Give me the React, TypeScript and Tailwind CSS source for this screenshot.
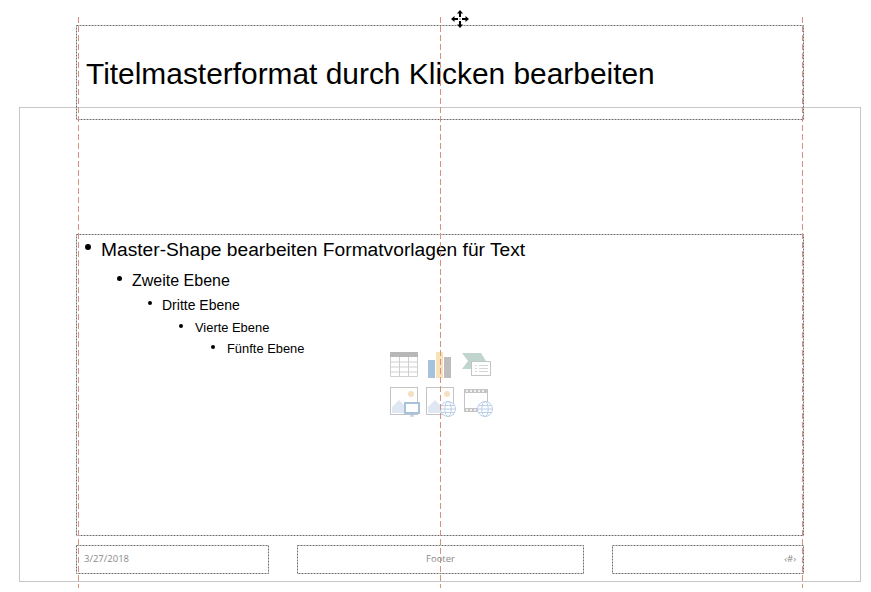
const levels = [
  { text: "Master-Shape bearbeiten Formatvorlagen für Text", row: "h-[22px] gap-[10px] pl-[9px] text-[19.2px]", dot: "size-[6px] mb-[6px]" },
  { text: "Zweite Ebene", row: "mt-[9px] h-[22px] gap-[10px] pl-[41px] text-[16px]", dot: "size-[5px] mb-[6px]" },
  { text: "Dritte Ebene", row: "mt-[4px] h-[18px] gap-[10px] pl-[72px] text-[14px]", dot: "size-[4px] mb-[5px]" },
  { text: "Vierte Ebene", row: "mt-[6px] h-[16px] gap-[12px] pl-[103px] text-[12.9px]", dot: "size-[4px] mb-[4px]" },
  { text: "Fünfte Ebene", row: "mt-[5px] h-[16px] gap-[12px] pl-[135px] text-[12.9px]", dot: "size-[4px] mb-[4px]" },
]

function DashedFrame() {
  return (
    <svg className="absolute inset-0 h-full w-full overflow-visible">
      <rect x="0.5" y="0.5" fill="none" stroke="#6f6f6f" strokeDasharray="2 1" style={{ width: "calc(100% - 1px)", height: "calc(100% - 1px)" }} />
    </svg>
  )
}

function Globe({ cx, cy }: { cx: number; cy: number }) {
  return (
    <g fill="none" stroke="#b4cbe5" strokeWidth="0.9">
      <circle cx={cx} cy={cy} r="7.500" fill="#fff" />
      <ellipse cx={cx} cy={cy} rx="3.200" ry="7.500" />
      <path d={`M${cx - 7.5} ${cy}h15M${cx - 6.500} ${cy - 3.500}h13M${cx - 6.500} ${cy + 3.500}h13`} />
    </g>
  )
}

function ContentIcons() {
  return (
    <svg width="104" height="66" viewBox="9 12 104 66">
      {/* table */}
      <rect x="10" y="12" width="28" height="5" fill="#b7b7b7" />
      <path d="M10.500 17v19.500h27V17M10 22h28M10 27h28M10 32h28M19.500 17v19M28.500 17v19" fill="none" stroke="#cfcfcf" />
      {/* chart */}
      <rect x="48" y="20" width="7" height="18" fill="#a6c2dd" />
      <rect x="56" y="12" width="7" height="26" fill="#f8e2b8" />
      <rect x="64" y="17" width="7" height="21" fill="#bdbdbd" />
      {/* smartart */}
      <path d="M82 13h19l5 8-5 8H82l6-8z" fill="#bfd5cd" />
      <rect x="91.500" y="21.500" width="19" height="14" fill="#fff" stroke="#c4c4c4" />
      <path d="M95 25.500h2M99 25.500h9M95 28.500h2M99 28.500h9M95 31.500h2M99 31.500h9" stroke="#d6d6d6" />
      {/* picture with monitor */}
      <rect x="10.500" y="47.500" width="27" height="27" fill="#fff" stroke="#c4c4c4" />
      <circle cx="31" cy="54" r="3" fill="#f6e0c2" />
      <path d="M12 73v-6l7-7 9 9 2 4z" fill="#dfe7f3" />
      <rect x="25" y="63" width="14" height="10" fill="#fff" stroke="#a6c2dd" strokeWidth="2" />
      <path d="M30 76h4M32 74v2" stroke="#a6c2dd" />
      {/* picture with globe */}
      <rect x="46.500" y="47.500" width="27" height="27" fill="#fff" stroke="#c4c4c4" />
      <circle cx="67" cy="54" r="3" fill="#f6e0c2" />
      <path d="M48 73v-6l7-7 9 9 2 4z" fill="#dfe7f3" />
      <Globe cx={68} cy={69} />
      {/* film with globe */}
      <rect x="84.500" y="49.500" width="23" height="22" fill="#fff" stroke="#c4c4c4" />
      <path d="M84 49h24v4H84zM84 68h24v4H84z" fill="#c4c4c4" />
      <path d="M86 51h2M90 51h2M94 51h2M98 51h2M102 51h2M86 70h2M90 70h2M94 70h2" stroke="#fff" strokeWidth="1.400" />
      <Globe cx={105} cy={69} />
    </svg>
  )
}

function MoveCursor() {
  return (
    <svg width="20" height="20" viewBox="0 0 20 20">
      <path d="M10 1l3 3.500h-2V8H9V4.500H7zM10 19l-3-3.500h2V12h2v3.500h2zM1 10l3.500-3v2H8v2H4.500v2zM19 10l-3.500 3v-2H12V9h3.500V7z" fill="#000" />
      <rect x="9.500" y="9.500" width="1" height="1" fill="#000" />
    </svg>
  )
}

function Guide() {
  return <div className="h-full w-px bg-[repeating-linear-gradient(to_bottom,#d9907e_0,#d9907e_6px,transparent_6px,transparent_9px)]" />
}

export default function App() {
  return (
    <div className="relative h-[592px] w-[871px] overflow-hidden bg-white font-['Liberation_Sans',sans-serif] text-black">
      {/* slide edge, behind the placeholders */}
      <div className="absolute inset-x-[10px] bottom-[10px] top-[107px] ml-[9px] h-[475px] w-[842px] border border-[#c6c6c6]" />

      {/* placeholders */}
      <div className="relative flex w-[728px] translate-x-[76px] flex-col pt-[25px]">
        <div className="relative flex h-[95px] items-center pl-[10px] pt-[4px] text-[29.9px]">
          <DashedFrame />
          Titelmasterformat durch Klicken bearbeiten
        </div>

        <div className="relative mt-[114px] h-[302px] pt-[5px]">
          <DashedFrame />
          {levels.map((l) => (
            <div key={l.text} className={`flex items-center ${l.row}`}>
              <span className={`shrink-0 rounded-full bg-black ${l.dot}`} />
              {l.text}
            </div>
          ))}
          <div className="absolute inset-0 flex items-center justify-center pl-[2px]">
            <ContentIcons />
          </div>
        </div>

        <div className="mt-[9px] flex h-[29px] justify-between font-['Open_Sans',sans-serif] text-[9.5px] text-[#8a8a8a]">
          <div className="relative flex w-[193px] items-center pl-[8px]">
            <DashedFrame />
            3/27/2018
          </div>
          <div className="relative flex w-[287px] items-center justify-center">
            <DashedFrame />
            Footer
          </div>
          <div className="relative flex w-[192px] items-center justify-end pr-[8px]">
            <DashedFrame />
            ‹#›
          </div>
        </div>
      </div>

      {/* guides */}
      <div className="absolute inset-x-0 bottom-[4px] top-[17px] flex justify-between pl-[78px] pr-[68px]">
        <Guide />
        <Guide />
        <Guide />
      </div>

      <div className="absolute inset-x-0 top-[9px] flex justify-center pl-[49px]">
        <MoveCursor />
      </div>
    </div>
  )
}
